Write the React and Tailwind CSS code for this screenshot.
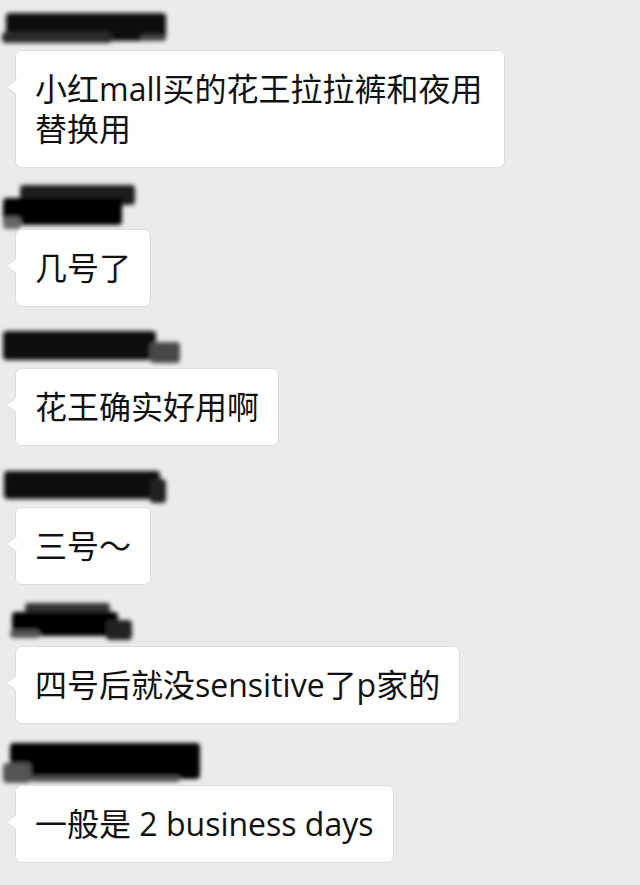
import React from 'react';

// Redacted sender names: blurred marker strokes
const scribbles = [
    [
        { x: 6, y: 9, w: 160, h: 28, c: '#0d0d0d' },
        { x: 2, y: 28, w: 110, h: 11, c: '#2a2a2a' },
        { x: 140, y: 31, w: 26, h: 6, c: '#444' },
    ],
    [
        { x: 20, y: 2, w: 115, h: 20, c: '#1a1a1a' },
        { x: 3, y: 15, w: 119, h: 27, c: '#000' },
        { x: 3, y: 34, w: 18, h: 12, c: '#666' },
    ],
    [
        { x: 3, y: 9, w: 153, h: 29, c: '#0a0a0a' },
        { x: 150, y: 20, w: 30, h: 21, c: '#4a4a4a' },
    ],
    [
        { x: 4, y: 10, w: 156, h: 28, c: '#080808' },
        { x: 150, y: 18, w: 16, h: 24, c: '#222' },
    ],
    [
        { x: 25, y: 3, w: 85, h: 14, c: '#333' },
        { x: 12, y: 12, w: 106, h: 24, c: '#000' },
        { x: 106, y: 20, w: 26, h: 20, c: '#222' },
        { x: 10, y: 30, w: 30, h: 8, c: '#555' },
    ],
    [
        { x: 10, y: 4, w: 190, h: 36, c: '#050505' },
        { x: 3, y: 24, w: 28, h: 20, c: '#555' },
        { x: 30, y: 37, w: 150, h: 6, c: '#555' },
    ],
];

const messages = [
    '小红mall买的花王拉拉裤和夜用替换用',
    '几号了',
    '花王确实好用啊',
    '三号～',
    '四号后就没sensitive了p家的',
    '一般是 2 business days',
];

const Name = ({ idx }) => (
    <svg width="210" height="46" viewBox="0 0 210 46" className="block overflow-visible">
        <defs>
            <filter id={`blur${idx}`} x="-10%" y="-30%" width="120%" height="160%">
                <feGaussianBlur stdDeviation="2.2" />
            </filter>
        </defs>
        <g filter={`url(#blur${idx})`}>
            {scribbles[idx].map((r, i) => (
                <rect key={i} x={r.x} y={r.y} width={r.w} height={r.h} rx="4" fill={r.c} />
            ))}
        </g>
    </svg>
);

const Bubble = ({ text }) => (
    <div className="relative ml-[15px] inline-block max-w-[490px] bg-white border border-[#dcdcdc] rounded-[7px] pl-[19px] pr-[19px] py-[18px] text-[32px] leading-[40px] text-[#111]">
        {/* Tail */}
        <svg width="11" height="16" viewBox="0 0 11 16" className="absolute left-[-10px] top-[28px]">
            <polygon points="11,0 0.5,8 11,16" fill="#fff" />
            <polyline points="11,0 0.5,8 11,16" fill="none" stroke="#dcdcdc" strokeWidth="1" />
        </svg>
        {text}
    </div>
);

const App = () => {
    return (
        <div
            className="w-[640px] h-[885px] overflow-hidden bg-[#ebebeb] pt-[4px]"
            style={{ fontFamily: '"Open Sans", "Noto Sans CJK SC", sans-serif' }}
        >
            <div className="flex flex-col gap-[15px]">
                {messages.map((m, i) => (
                    <div key={i} className="flex flex-col items-start">
                        <Name idx={i} />
                        <Bubble text={m} />
                    </div>
                ))}
            </div>
        </div>
    );
};

export default App;
